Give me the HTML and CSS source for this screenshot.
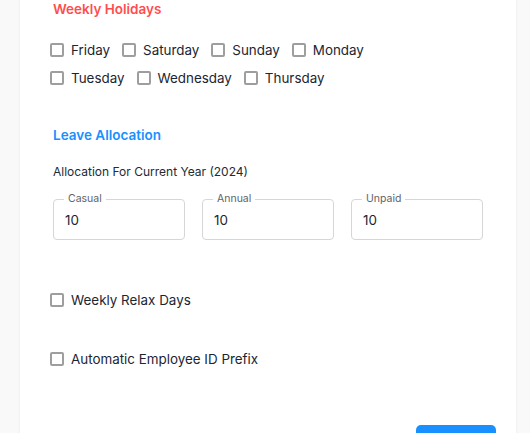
FILE: index.html
```html
<!DOCTYPE html>
<html>
<head>
<meta charset="utf-8">
<link rel="stylesheet" href="styles.css">
</head>
<body>
<div class="card">
  <h3 class="heading red">Weekly Holidays</h3>
  <div class="days">
    <div class="row">
      <label class="check"><span class="box"></span>Friday</label>
      <label class="check"><span class="box"></span>Saturday</label>
      <label class="check"><span class="box"></span>Sunday</label>
      <label class="check"><span class="box"></span>Monday</label>
    </div>
    <div class="row">
      <label class="check"><span class="box"></span>Tuesday</label>
      <label class="check"><span class="box"></span>Wednesday</label>
      <label class="check"><span class="box"></span>Thursday</label>
    </div>
  </div>

  <h3 class="heading blue">Leave Allocation</h3>
  <p class="sub">Allocation For Current Year (2024)</p>
  <div class="fields">
    <div class="field"><span class="legend">Casual</span><span class="value">10</span></div>
    <div class="field"><span class="legend">Annual</span><span class="value">10</span></div>
    <div class="field"><span class="legend">Unpaid</span><span class="value">10</span></div>
  </div>

  <label class="check single first"><span class="box"></span>Weekly Relax Days</label>
  <label class="check single second"><span class="box"></span>Automatic Employee ID Prefix</label>

  <div class="actions"><button class="btn"><span class="btn-text">Save</span></button></div>
</div>
</body>
</html>
```
FILE: styles.css
```css
html, body {
  margin: 0;
  padding: 0;
  background: #f9f9f9;
  font-family: "Inter", "Noto Sans", sans-serif;
  color: #1f2a37;
  overflow: hidden;
}
.card {
  margin-left: 20px;
  width: 496px;
  height: 480px;
  background: #fff;
  box-shadow: 0 0 3px rgba(0,0,0,0.06);
  padding: 0 33px;
  box-sizing: border-box;
}
.heading {
  margin: 0;
  font-size: 13.5px;
  font-weight: 600;
  line-height: 18px;
}
.red { color: #ff4d4f; }
.blue { color: #1890ff; margin-top: 33px; line-height: 20px; }
.days {
  margin-top: 18px;
  margin-left: -3px;
}
.row {
  display: flex;
}
.check {
  display: flex;
  align-items: center;
  height: 28px;
  font-size: 13.4px;
  margin-right: 12px;
  color: #1c2532;
}
.box {
  width: 10px;
  height: 10px;
  border: 2px solid #9e9e9e;
  border-radius: 2px;
  margin-right: 7px;
  flex: none;
}
.sub {
  margin: 17px 0 0;
  font-size: 12px;
  line-height: 20px;
  color: #212b36;
}
.fields {
  display: flex;
  gap: 17px;
  margin-top: 17px;
}
.field {
  position: relative;
  width: 132px;
  height: 41px;
  box-sizing: border-box;
  border: 1px solid #d6d6d6;
  border-radius: 4px;
  display: flex;
  align-items: center;
  padding-left: 11px;
}
.legend {
  position: absolute;
  top: -8px;
  left: 10px;
  padding: 0 4px;
  background: #fff;
  font-size: 10.5px;
  line-height: 14px;
  color: #5f6368;
}
.value {
  font-size: 13.4px;
  color: #1c2532;
}
.single { margin-left: -3px; }
.first { margin-top: 46px; }
.second { margin-top: 31px; }
.actions {
  display: flex;
  justify-content: flex-end;
  margin-top: 52px;
  margin-right: -13px;
}
.btn {
  display: block;
  width: 80px;
  height: 40px;
  border: none;
  border-radius: 5px;
  background: #1890ff;
  color: #fff;
  font-family: inherit;
  font-size: 14px;
  padding: 0;
}
.btn-text {
  display: block;
  padding-top: 12px;
  line-height: 16px;
}
```
